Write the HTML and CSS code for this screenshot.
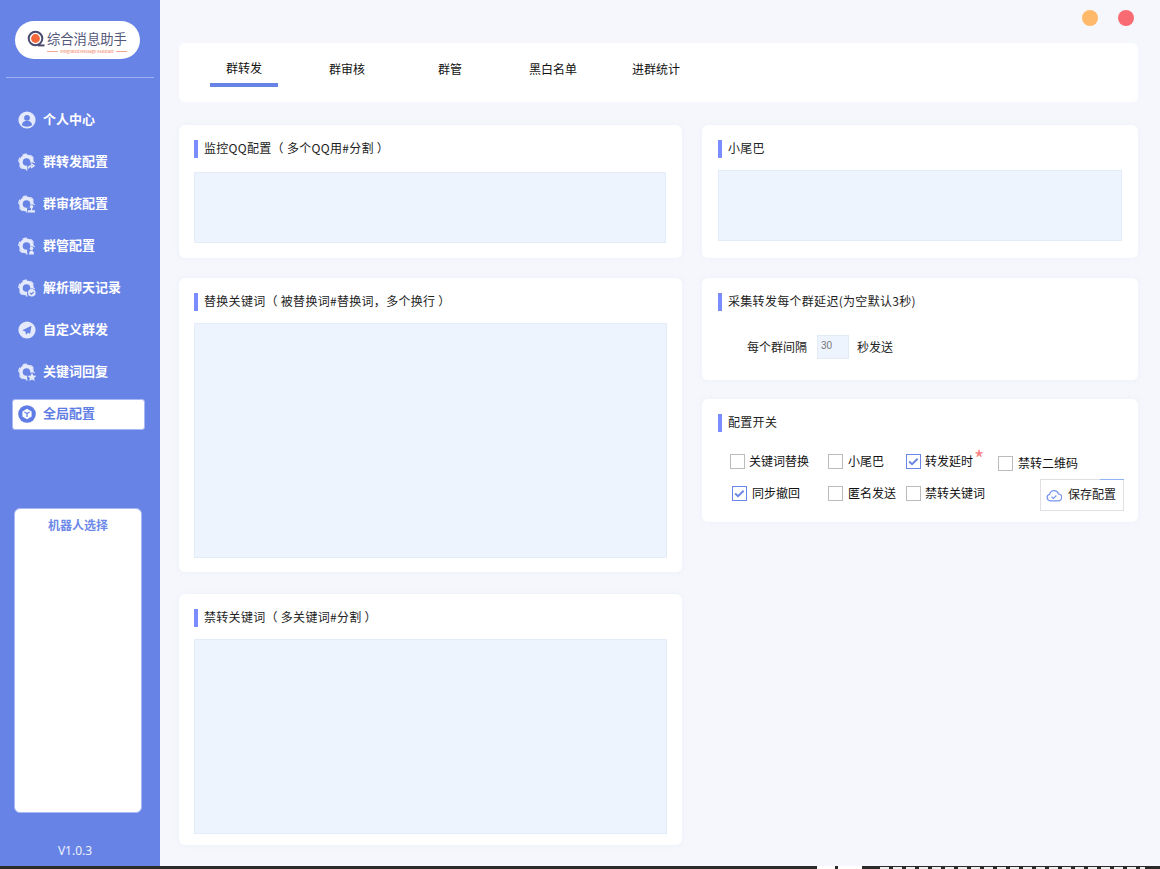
FILE: index.html
```html
<!DOCTYPE html>
<html lang="zh-CN">
<head>
  <meta charset="UTF-8">
  <title>综合消息助手</title>
  <link rel="stylesheet" href="styles.css">
</head>
<body>
<svg class="defs" width="0" height="0">
  <symbol id="gear" viewBox="0 0 18 18">
    <circle cx="8.5" cy="9" r="5.6" fill="none" stroke="currentColor" stroke-width="3.6"/>
    <circle cx="8.5" cy="9" r="7.800" fill="none" stroke="currentColor" stroke-width="1.200" stroke-dasharray="4.600 3.500"/>
    <circle cx="14" cy="14.5" r="5" fill="#6783e6"/>
  </symbol>
</svg>
<div class="app">
  <aside class="sidebar">
    <div class="logo">
      <svg class="logo-icon" viewBox="0 0 18 18" width="18" height="18">
        <circle cx="8.5" cy="8.5" r="6.800" fill="none" stroke="#4a4a6e" stroke-width="2"/>
        <circle cx="8.5" cy="8.5" r="4.400" fill="#f4683c"/>
        <path d="M11 15.400h6.500" stroke="#4a4a6e" stroke-width="2"/>
      </svg>
      <div class="logo-text">
        <div class="logo-name">综合消息助手</div>
        <div class="logo-sub">Integrated Message Assistant</div>
      </div>
    </div>
    <nav class="menu">
      <a class="menu-item">
        <svg class="menu-icon" viewBox="0 0 18 18">
          <circle cx="9" cy="9" r="8.600" fill="currentColor"/>
          <circle cx="9" cy="6.800" r="2.900" fill="#6783e6"/>
          <path d="M3.900 14c.4-3 2.400-4.200 5.100-4.200s4.700 1.200 5.100 4.200c-2.800 2.200-7.400 2.200-10.200 0z" fill="#6783e6"/>
        </svg>
        <span class="menu-label">个人中心</span>
      </a>
      <a class="menu-item">
        <svg class="menu-icon" viewBox="0 0 18 18">
          <use href="#gear"/>
          <path d="M10 15.500c.8-2 2.200-2.800 4-2.800M13 10.700l3 2-3 2.300" fill="none" stroke="currentColor" stroke-width="1.500"/>
        </svg>
        <span class="menu-label">群转发配置</span>
      </a>
      <a class="menu-item">
        <svg class="menu-icon" viewBox="0 0 18 18">
          <use href="#gear"/>
          <circle cx="13.500" cy="11.700" r="1.800" fill="currentColor"/>
          <path d="M13 13h1.200v2.300H17v2.200h-7v-2.200h3z" fill="currentColor"/>
        </svg>
        <span class="menu-label">群审核配置</span>
      </a>
      <a class="menu-item">
        <svg class="menu-icon" viewBox="0 0 18 18">
          <use href="#gear"/>
          <circle cx="13.500" cy="11.500" r="1.800" fill="currentColor"/>
          <path d="M11 17.500c0-2.600 1-4 2.500-4s2.500 1.400 2.500 4z" fill="currentColor"/>
        </svg>
        <span class="menu-label">群管配置</span>
      </a>
      <a class="menu-item">
        <svg class="menu-icon" viewBox="0 0 18 18">
          <use href="#gear"/>
          <circle cx="13.800" cy="13.800" r="3.800" fill="currentColor"/>
          <path d="M12 13.800l1.500 1.400 2.300-2.300" fill="none" stroke="#6783e6" stroke-width="1.100"/>
        </svg>
        <span class="menu-label">解析聊天记录</span>
      </a>
      <a class="menu-item">
        <svg class="menu-icon" viewBox="0 0 18 18">
          <circle cx="9" cy="9" r="8.600" fill="currentColor"/>
          <path d="M13.500 4.800L4.300 9.300l3 1.200.9 3.300 1.700-2 2.200 1z" fill="#6783e6"/>
        </svg>
        <span class="menu-label">自定义群发</span>
      </a>
      <a class="menu-item">
        <svg class="menu-icon" viewBox="0 0 18 18">
          <use href="#gear"/>
          <path d="M14 9.800l1.300 2.700 3 .4-2.200 2 .6 3-2.700-1.500-2.700 1.500.6-3-2.200-2 3-.4z" fill="currentColor"/>
        </svg>
        <span class="menu-label">关键词回复</span>
      </a>
      <a class="menu-item active">
        <svg class="menu-icon" viewBox="0 0 18 18">
          <circle cx="9" cy="9" r="8.800" fill="currentColor"/>
          <path d="M9 3.800l4.600 2.600v5.200L9 14.200l-4.600-2.600V6.400z" fill="#fff"/>
          <path d="M6.400 7L9 8.500 11.600 7M9 8.500v3.400" fill="none" stroke="#6783e6" stroke-width="1.300"/>
        </svg>
        <span class="menu-label">全局配置</span>
      </a>
    </nav>
    <section class="robots">
      <h4>机器人选择</h4>
    </section>
    <div class="version">V1.0.3</div>
  </aside>

  <main class="main">
    <div class="window-btns">
      <span class="dot dot-min"></span>
      <span class="dot dot-close"></span>
    </div>
    <div class="tabs">
      <a class="tab active">群转发</a>
      <a class="tab">群审核</a>
      <a class="tab">群管</a>
      <a class="tab">黑白名单</a>
      <a class="tab">进群统计</a>
    </div>
    <div class="columns">
      <div class="col">
        <section class="card">
          <h3 class="card-title">监控QQ配置（ 多个QQ用#分割 ）</h3>
          <textarea class="area area-qq"></textarea>
        </section>
        <section class="card card-replace">
          <h3 class="card-title">替换关键词（ 被替换词#替换词，多个换行 ）</h3>
          <textarea class="area area-replace"></textarea>
        </section>
        <section class="card card-ban">
          <h3 class="card-title">禁转关键词（ 多关键词#分割 ）</h3>
          <textarea class="area area-ban"></textarea>
        </section>
      </div>
      <div class="col">
        <section class="card card-right card-tail">
          <h3 class="card-title">小尾巴</h3>
          <textarea class="area area-tail"></textarea>
        </section>
        <section class="card card-right card-delay">
          <h3 class="card-title">采集转发每个群延迟(为空默认3秒)</h3>
          <div class="delay-row">
            <span>每个群间隔</span>
            <input class="delay-input" type="text" value="30">
            <span>秒发送</span>
          </div>
        </section>
        <section class="card card-right card-switch">
          <h3 class="card-title">配置开关</h3>
          <div class="switches">
            <label class="check"><span class="box"></span>关键词替换</label>
            <label class="check check-far"><span class="box"></span>小尾巴</label>
            <label class="check"><span class="box on"><svg viewBox="0 0 15 15" width="13" height="13"><path d="M2.500 7.500l3.300 3.200 6.500-6.400" fill="none" stroke="#6a86e6" stroke-width="2.200"/></svg></span>转发延时<i class="star">*</i></label>
            <label class="check check-low"><span class="box"></span>禁转二维码</label>
            <label class="check check-in check-far"><span class="box on"><svg viewBox="0 0 15 15" width="13" height="13"><path d="M2.500 7.500l3.300 3.200 6.500-6.400" fill="none" stroke="#6a86e6" stroke-width="2.200"/></svg></span>同步撤回</label>
            <label class="check check-far"><span class="box"></span>匿名发送</label>
            <label class="check"><span class="box"></span>禁转关键词</label>
            <button class="save">
              <svg viewBox="0 0 16 14" width="16" height="14">
                <path d="M4.200 12.800a3.300 3.300 0 0 1-.5-6.500 4.500 4.500 0 0 1 8.700-.5 3.500 3.500 0 0 1-.4 7z" fill="none" stroke="#7b96ee" stroke-width="1.300"/>
                <path d="M5.500 8.700l1.900 1.800 3-3" fill="none" stroke="#7b96ee" stroke-width="1.200"/>
              </svg>
              <span class="save-label">保存配置</span>
            </button>
          </div>
        </section>
      </div>
    </div>
  </main>
</div>
<div class="taskbar"><span class="bar-block"></span><span class="bar-marks"></span></div>
</body>
</html>
```
FILE: styles.css
```css
* {
  box-sizing: border-box;
}
html, body {
  margin: 0;
  height: 869px;
  overflow: hidden;
}
body {
  background: #2b2b2b;
  font-family: "Noto Sans CJK SC", "Noto Sans", sans-serif;
  font-size: 12px;
  color: #222;
}
.defs {
  display: block;
  height: 0;
}
.app {
  display: flex;
  height: 866px;
  background: #f5f7fc;
}

/* sidebar */
.sidebar {
  width: 160px;
  flex-shrink: 0;
  background: #6783e6;
  padding-top: 21px;
  display: flex;
  flex-direction: column;
}
.logo {
  margin-left: 15px;
  width: 125px;
  height: 38px;
  background: #fff;
  border-radius: 19px;
  display: flex;
  align-items: center;
  padding-left: 12px;
}
.logo-icon {
  margin: 0 2px 2px 0;
  flex-shrink: 0;
}
.logo-text {
  margin-top: 4px;
}
.logo-name {
  font-size: 13.3px;
  line-height: 15px;
  color: #55587a;
  white-space: nowrap;
}
.logo-sub {
  display: flex;
  align-items: center;
  justify-content: center;
  gap: 2px;
  margin-top: 3px;
  font-size: 4px;
  line-height: 5px;
  color: #f0765a;
  white-space: nowrap;
  width: 80px;
}
.logo-sub::before, .logo-sub::after {
  content: "";
  width: 11px;
  height: 1px;
  background: #f3a692;
}
.menu {
  margin: 18px 6px 0;
  padding-top: 27px;
  border-top: 1px solid #9fb0f3;
  display: flex;
  flex-direction: column;
}
.menu-item {
  margin-left: 6px;
  width: 133px;
  height: 31px;
  flex-shrink: 0;
  margin-bottom: 11px;
  padding: 0 0 2px 6px;
  display: flex;
  align-items: center;
  gap: 7px;
  font-size: 13px;
  font-weight: 700;
  color: #fff;
  white-space: nowrap;
}
.menu-label {
  margin-bottom: 2px;
}
.menu-item.active {
  background: #fff;
  color: #5f7de4;
  border-radius: 3px;
  border: 1px solid #a9b9f3;
  padding-left: 5px;
}
.menu-icon {
  width: 18px;
  height: 18px;
  color: #e4e9fb;
  flex-shrink: 0;
}
.active .menu-icon {
  color: #5f7de4;
}
.robots {
  margin: 67px 0 0 14px;
  width: 128px;
  height: 305px;
  flex-shrink: 0;
  background: #fff;
  border: 1px solid #a9b9f3;
  border-radius: 6px;
}
.robots h4 {
  margin: 7px 0 0;
  font-size: 12px;
  line-height: 17px;
  font-weight: 700;
  text-align: center;
  color: #6d88e8;
}
.version {
  margin-top: 29px;
  width: 150px;
  text-align: center;
  font-family: "Noto Sans", sans-serif;
  font-size: 12px;
  line-height: 18px;
  color: #eef1ff;
}

/* main */
.main {
  flex: 1;
  padding: 0 22px 0 19px;
}
.window-btns {
  height: 43px;
  padding: 10px 4px 0 0;
  display: flex;
  justify-content: flex-end;
  gap: 20px;
}
.dot {
  width: 16px;
  height: 16px;
  border-radius: 50%;
}
.dot-min {
  background: #ffb96a;
}
.dot-close {
  background: #f96b72;
}
.tabs {
  height: 59px;
  padding-left: 13.5px;
  background: #fff;
  border-radius: 6px;
  display: flex;
  align-items: flex-start;
  margin-bottom: 23px;
}
.tab {
  width: 103px;
  height: 44px;
  padding-top: 17px;
  line-height: 18px;
  text-align: center;
  color: #111;
  position: relative;
}
.tab.active {
  padding-top: 16px;
}
.tab.active::after {
  content: "";
  position: absolute;
  left: 17.5px;
  bottom: 0;
  width: 68px;
  height: 4px;
  background: #6783e6;
}
.columns {
  display: grid;
  grid-template-columns: 503px 436px;
  column-gap: 20px;
}
.col {
  display: flex;
  flex-direction: column;
}
.card {
  background: #fff;
  border-radius: 6px;
  padding: 15px 15px;
  box-shadow: 0 0 4px rgba(230, 235, 248, 0.5);
}
.card-right {
  padding: 15px 16px;
}
.card-title {
  margin: 0;
  height: 18px;
  line-height: 16px;
  padding-left: 6px;
  border-left: 4px solid #7b8cff;
  font-size: 12px;
  font-weight: 400;
  letter-spacing: 0.3px;
  color: #222;
  white-space: nowrap;
}
.area {
  display: block;
  resize: none;
  background: #edf4fe;
  border: 1px solid #e3ecf8;
  outline: none;
  padding: 4px;
}
.area-qq {
  margin-top: 14px;
  width: 472px;
  height: 71px;
}
.area-replace {
  margin-top: 12px;
  width: 473px;
  height: 235px;
}
.area-ban {
  margin-top: 12px;
  width: 473px;
  height: 195px;
}
.area-tail {
  margin-top: 12px;
  width: 404px;
  height: 71px;
}
.card-replace {
  margin-top: 20px;
  height: 294px;
}
.card-ban {
  margin-top: 22px;
  height: 251px;
}
.card-tail {
  height: 133px;
}
.card-delay {
  margin-top: 20px;
  height: 102px;
}
.card-switch {
  margin-top: 19px;
  height: 123px;
}
.delay-row {
  margin: 24px 0 0 29px;
  display: flex;
  align-items: center;
  gap: 8px;
  color: #222;
}
.delay-row span {
  margin-top: -2px;
}
.delay-input {
  margin-left: 2px;
  width: 32px;
  height: 24px;
  background: #edf4fe;
  border: 1px solid #e3ebf7;
  outline: none;
  padding: 0 0 4px 3px;
  font-family: "Liberation Sans", sans-serif;
  font-size: 10px;
  color: #777;
}
.switches {
  margin: 22px 0 0 12px;
  display: grid;
  grid-template-columns: 98px 78px 92px 1fr;
  row-gap: 15px;
  align-items: start;
}
.check {
  display: flex;
  align-items: flex-start;
  height: 15px;
  gap: 4px;
  line-height: 13px;
  white-space: nowrap;
  color: #111;
}
.check-far {
  gap: 5px;
}
.check-low {
  margin-top: 2px;
  gap: 5px;
}
.check-in {
  margin-left: 2px;
}
.box {
  width: 15px;
  height: 15px;
  border: 1px solid #bbb;
  display: flex;
  align-items: center;
  justify-content: center;
  flex-shrink: 0;
}
.box.on {
  border-color: #6a86e6;
}
.star {
  font-style: normal;
  font-size: 22px;
  line-height: 15px;
  color: #fa8080;
  margin: -4px 0 0 -3px;
}
.save {
  justify-self: end;
  margin: -7px -2px 0 0;
  width: 84px;
  height: 32px;
  padding: 0 0 0 5px;
  display: flex;
  align-items: center;
  gap: 6px;
  background: #fff;
  border: 1px solid #e0e0e4;
  font-family: inherit;
  font-size: 12px;
  color: #222;
  position: relative;
}
.save-label {
  margin-bottom: 3px;
}
.save::before {
  content: "";
  position: absolute;
  top: -1px;
  right: -1px;
  width: 24px;
  height: 1px;
  background: #8fb4f5;
}

/* leftover of what lay behind the window */
.taskbar {
  height: 3px;
  display: flex;
  padding-left: 817px;
  overflow: hidden;
}
.bar-block {
  width: 45px;
  height: 3px;
  background: linear-gradient(90deg, #fff 0 40%, #2b2b2b 40% 46%, #fff 46% 100%);
}
.bar-marks {
  margin: 1px 0 0 18px;
  width: 265px;
  height: 2px;
  background: repeating-linear-gradient(90deg, #eee 0 9px, #2b2b2b 9px 13px);
}
```
